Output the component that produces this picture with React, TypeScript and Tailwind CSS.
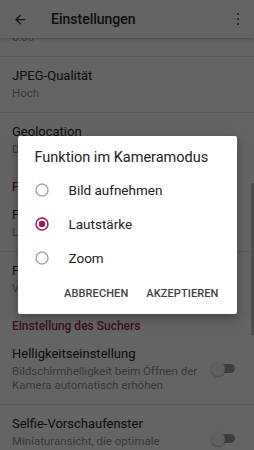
import { ArrowLeft } from "lucide-react";

const FONT = "font-['Roboto','Liberation_Sans',sans-serif]";

type Pref = {
  title: string;
  summary: string;
  toggle?: boolean;
  divider?: boolean;
};

function PrefItem({ title, summary, toggle, divider }: Pref) {
  return (
    <div className={divider ? "border-b border-[#dcdcdc]" : ""}>
      <div className="flex items-center pl-[12px] pr-[19px] pt-[10px] pb-[12px]">
        <div className="flex-1 min-w-0">
          <p className="text-[13px] leading-[18px] text-[#212121]">{title}</p>
          <p className="mt-[1px] text-[11.5px] leading-[14px] text-[#8a8a8a]">{summary}</p>
        </div>
        {toggle && (
          <div className="relative ml-3 flex h-[14px] w-[24px] items-center">
            <div className="ml-[3px] h-[9px] w-[21px] rounded-full bg-[#9a9a9a]" />
            <div className="absolute left-0 top-0 h-[14px] w-[14px] rounded-full bg-[#f1f1f1] shadow-[0_1px_2px_rgba(0,0,0,0.35)]" />
          </div>
        )}
      </div>
    </div>
  );
}

function Category({ label }: { label: string }) {
  return (
    <p className="pl-[12px] pt-[11px] pb-[1px] text-[12px] font-medium leading-[16px] text-[#a3185f]">
      {label}
    </p>
  );
}

function Radio({ checked }: { checked: boolean }) {
  return (
    <svg width="14" height="14" viewBox="0 0 14 14" className="shrink-0">
      <circle
        cx="7"
        cy="7"
        r="6"
        fill="none"
        stroke={checked ? "#a0175f" : "#a8a8a8"}
        strokeWidth="1.5"
      />
      {checked && <circle cx="7" cy="7" r="3.2" fill="#a0175f" />}
    </svg>
  );
}

const OPTIONS = ["Bild aufnehmen", "Lautstärke", "Zoom"];

export default function App() {
  const selected = "Lautstärke";

  return (
    <div className={`relative h-[450px] w-[254px] overflow-hidden bg-[#fafafa] ${FONT}`}>
      {/* Settings list, scrolled */}
      <div className="pt-[1px]">
        <PrefItem title="Auflösung" summary="6:03" divider />
        <PrefItem title="JPEG-Qualität" summary="Hoch" divider />
        <PrefItem title="Geolocation" summary="Deaktiviert" />
        <Category label="Funktionen" />
        <PrefItem title="Funktion im Kameramodus" summary="Lautstärke" divider />
        <PrefItem title="Fingerabdruck" summary="Verwenden" />
        <Category label="Einstellung des Suchers" />
        <PrefItem
          title="Helligkeitseinstellung"
          summary="Bildschirmhelligkeit beim Öffnen der Kamera automatisch erhöhen"
          toggle
          divider
        />
        <PrefItem
          title="Selfie-Vorschaufenster"
          summary="Miniaturansicht, die optimale Bildwirkung beim Selfie zeigt"
          toggle
        />
      </div>

      {/* Toolbar over the list */}
      <div className="absolute inset-x-0 top-0 flex h-[38px] items-center bg-[#fafafa] shadow-[0_1px_3px_rgba(0,0,0,0.25)]">
        <ArrowLeft className="ml-[13px] h-[15px] w-[15px] text-[#333]" strokeWidth={2} />
        <span className="ml-[23px] flex-1 text-[14px] font-medium text-[#212121]">Einstellungen</span>
        <div className="mr-[15px] flex flex-col items-center gap-[2.5px]">
          <span className="h-[2.5px] w-[2.5px] rounded-full bg-[#333]" />
          <span className="h-[2.5px] w-[2.5px] rounded-full bg-[#333]" />
          <span className="h-[2.5px] w-[2.5px] rounded-full bg-[#333]" />
        </div>
      </div>

      {/* Scroll indicator */}
      <div className="absolute right-0 top-[183px] h-[152px] w-[3px] bg-[#c4c4c4]" />

      {/* Dim + dialog */}
      <div className="absolute inset-0 flex items-center justify-center bg-black/[0.6]">
        <div className="w-[219px] rounded-[2px] bg-white pt-[13px] pb-[8px] shadow-[0_4px_12px_rgba(0,0,0,0.35)]">
          <p className="px-[17px] text-[14.5px] leading-[18px] text-[#212121]">Funktion im Kameramodus</p>
          <div className="mt-[6px]">
            {OPTIONS.map((opt) => (
              <div key={opt} className="flex h-[34px] items-center pl-[17px]">
                <Radio checked={opt === selected} />
                <span className="ml-[20px] text-[13.5px] text-[#212121]">{opt}</span>
              </div>
            ))}
          </div>
          <div className="mt-[7px] flex h-[24px] items-center justify-end gap-[18px] pr-[18px]">
            <span className="text-[11px] font-medium tracking-[0.1px] text-[#424242]">ABBRECHEN</span>
            <span className="text-[11px] font-medium tracking-[0.1px] text-[#424242]">AKZEPTIEREN</span>
          </div>
        </div>
      </div>
    </div>
  );
}
